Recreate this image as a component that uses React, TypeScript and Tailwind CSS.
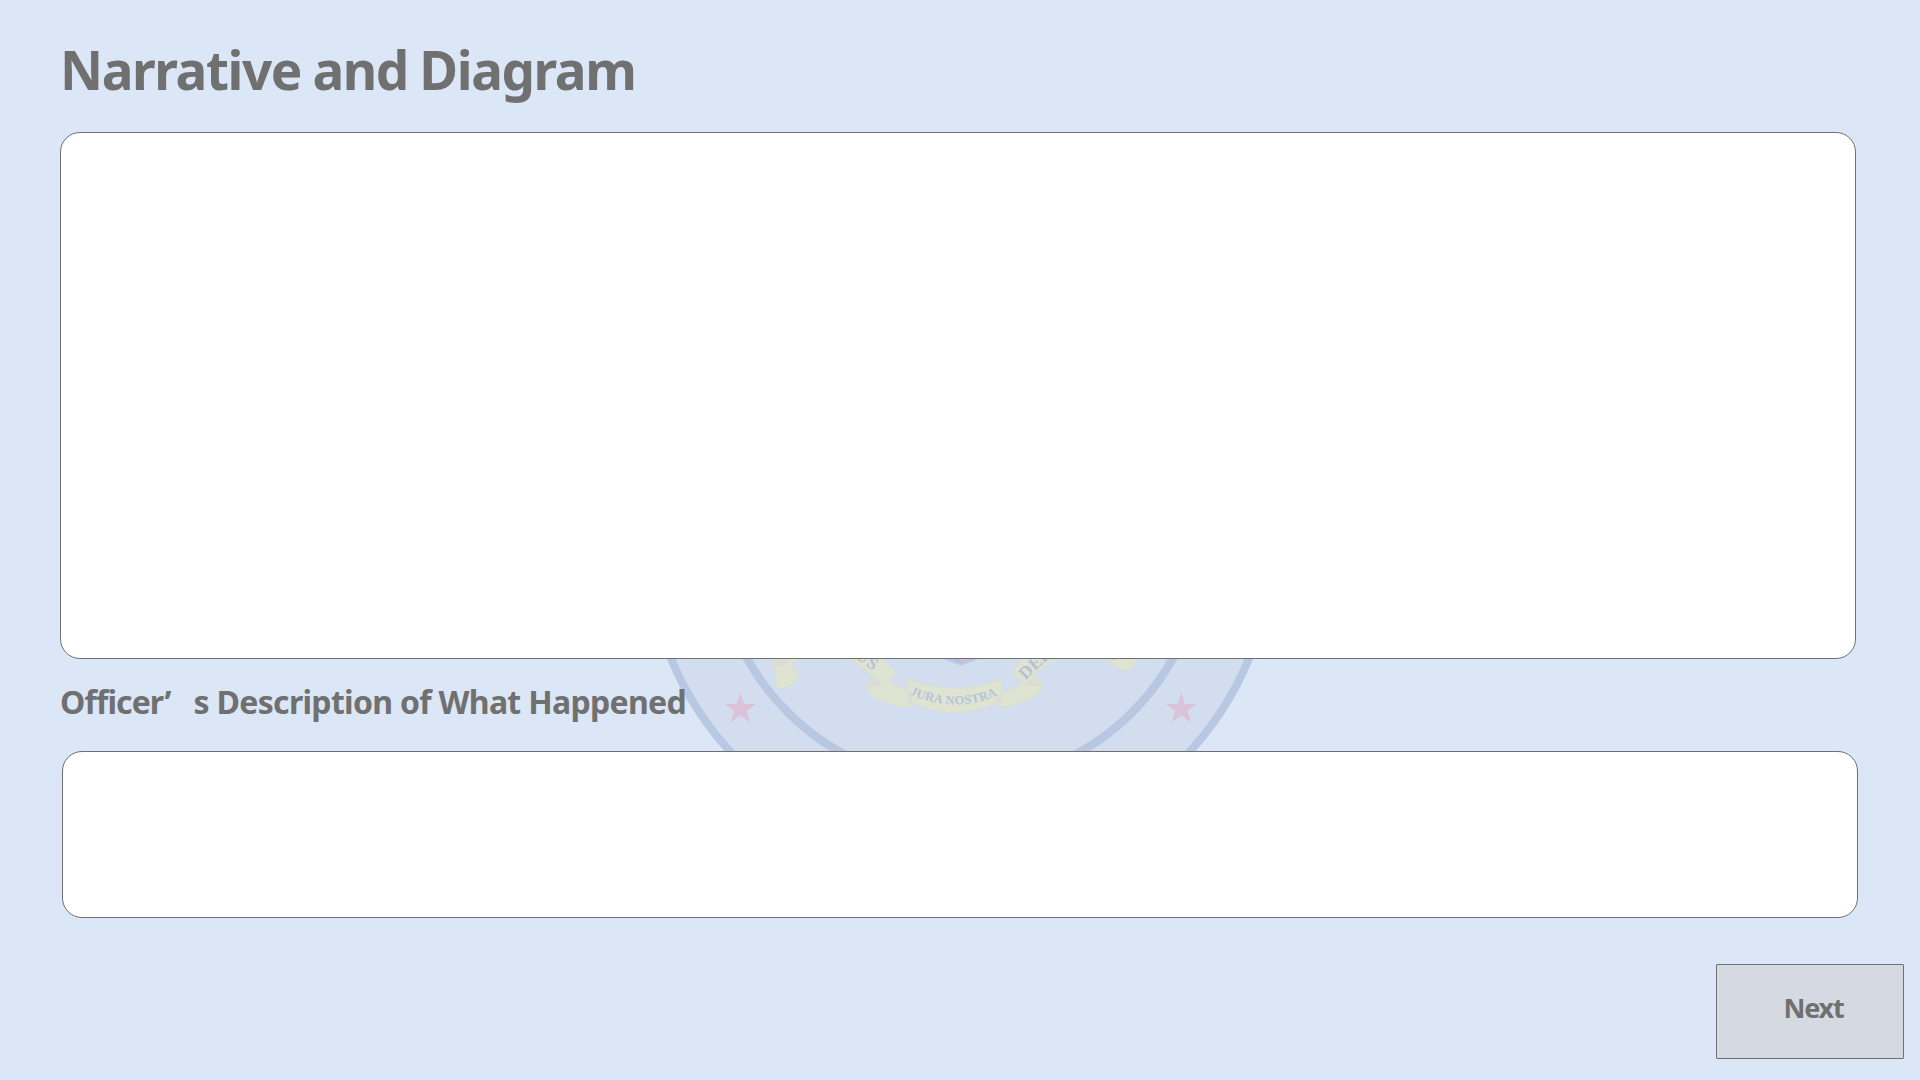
const STAR =
  "0,-16.4 3.7,-5.1 15.6,-5.1 6,2 9.7,13.4 0,6.3 -9.7,13.4 -6,2 -15.6,-5.1 -3.7,-5.1";

function Seal() {
  return (
    <svg
      className="absolute left-[640px] top-[220px] -z-10 h-[640px] w-[640px]"
      viewBox="640 220 640 640"
      fontFamily="'Liberation Serif', serif"
      fontWeight="700"
    >
      <circle cx="960" cy="540" r="312.3" fill="#d2ddef" stroke="#b9c8e2" strokeWidth="8" />
      <circle cx="960" cy="540" r="243.6" fill="none" stroke="#b9c8e2" strokeWidth="8.4" />
      <g fill="#dcc2d8">
        <polygon points={STAR} transform="translate(740.4 709)" />
        <polygon points={STAR} transform="translate(1181.3 709)" />
      </g>

      <path d="M938 657L960.7 665.5L984 657V650H938Z" fill="#b9c8de" />
      <path d="M944 655L960.5 663V650H944Z" fill="#abc0e6" />
      <path d="M960.5 650V663L979 656V650Z" fill="#d9bdd5" />

      <g fill="#dfe3d2" stroke="#dcdfcc" strokeWidth="1">
        <path d="M773 650Q771 660 774 667Q777 677 775.7 687.2Q786 690 792 684Q796 680 799 677Q796 671 791 665Q794 661 805 657V650Z" />
        <path d="M1100 655L1121.7 670H1131L1139 655Z" />
        <path d="M866.5 686Q869 697 886 702.5Q900 708 912 707L908 691Q897 687 888 680L874 676Z" />
        <path d="M1043 686Q1039 697 1022 702.5Q1009 708 996 707L999 694Q1013 691 1025 680L1036 676Z" />
        <path d="M840 652L884.5 684L897 672.7L874 652Z" />
        <path d="M1070 652Q1042 664 1025 684L1011.7 672.7L1028 652Z" />
        <path d="M907.7 679.3Q930 688.5 955 688.5Q981 688 1001.7 679.3V699.5Q980 712.3 955 712.3Q929 712.3 907.7 701Z" />
      </g>
      <g fill="#d9ddd5">
        <path d="M775 650L774 667Q780 664 783 667Q788 665 789 661L787 650Z" />
        <path d="M866.5 686Q869 679 873 677L884.5 684L888 681Q882 688 866.5 686Z" />
        <path d="M1041.7 685Q1041 679 1036 677L1025 684L1022 681Q1028 688 1041.7 685Z" />
        <path d="M907.7 691Q914 699 911.5 703L907.7 701Z" />
        <path d="M1001.7 691Q995 700 996.5 706L1001.7 699.5Z" />
      </g>

      <g fill="#b5c2d8">
        <path id="motto" d="M909.5 694Q932 704.5 957 704.5Q983 704 1004 691.5" fill="none" />
        <text fontSize="12.5">
          <textPath href="#motto" textLength="91">
            JURA NOSTRA
          </textPath>
        </text>
        <g fontSize="17.5" textAnchor="middle">
          <text transform="translate(872.7 663.3) rotate(36)" y="6">S</text>
          <text transform="translate(863 656) rotate(36)" y="6">U</text>
          <text transform="translate(1026 672) rotate(-45)" y="5.5">D</text>
          <text transform="translate(1035.5 663) rotate(-42)" y="5.5">E</text>
          <text transform="translate(1044 656) rotate(-38)" y="5.5">F</text>
          <text transform="translate(1113 653.5) rotate(35)" y="5">E</text>
        </g>
      </g>
    </svg>
  );
}

export default function App() {
  return (
    <div className="relative isolate h-[1080px] w-[1920px] overflow-hidden bg-[#dbe6f6] font-['Noto_Sans',sans-serif] font-bold text-[#707070]">
      <Seal />
      <main className="flex h-full flex-col pl-[60px] pr-4">
        <h1 className="flex h-[132px] shrink-0 items-center whitespace-pre pt-[8px] text-[53px] leading-[72px] tracking-[-1.4px] [word-spacing:-1px]">
          Narrative and Diagram
        </h1>
        <section className="h-[527px] w-[1796px] shrink-0 rounded-[20px] border border-[#707070] bg-white" />
        <h2 className="flex h-[92px] shrink-0 items-center whitespace-nowrap pb-[7px] text-[32px] leading-[44px] tracking-[-0.7px]">
          <span className="tracking-[-0.9px]">Officer’</span>
          <span className="ml-[23px]">s Description of What Happened</span>
        </h2>
        <section className="ml-[2px] h-[167px] w-[1796px] shrink-0 rounded-[20px] border border-[#707070] bg-white" />
        <button className="mt-[46px] flex h-[95px] w-[188px] shrink-0 items-center justify-center self-end rounded-[1px] border border-[#707070] bg-[#d5d9e2] pb-[7px] pl-[7px] text-[27px] leading-9 tracking-[-1.2px]">
          Next
        </button>
      </main>
    </div>
  );
}
